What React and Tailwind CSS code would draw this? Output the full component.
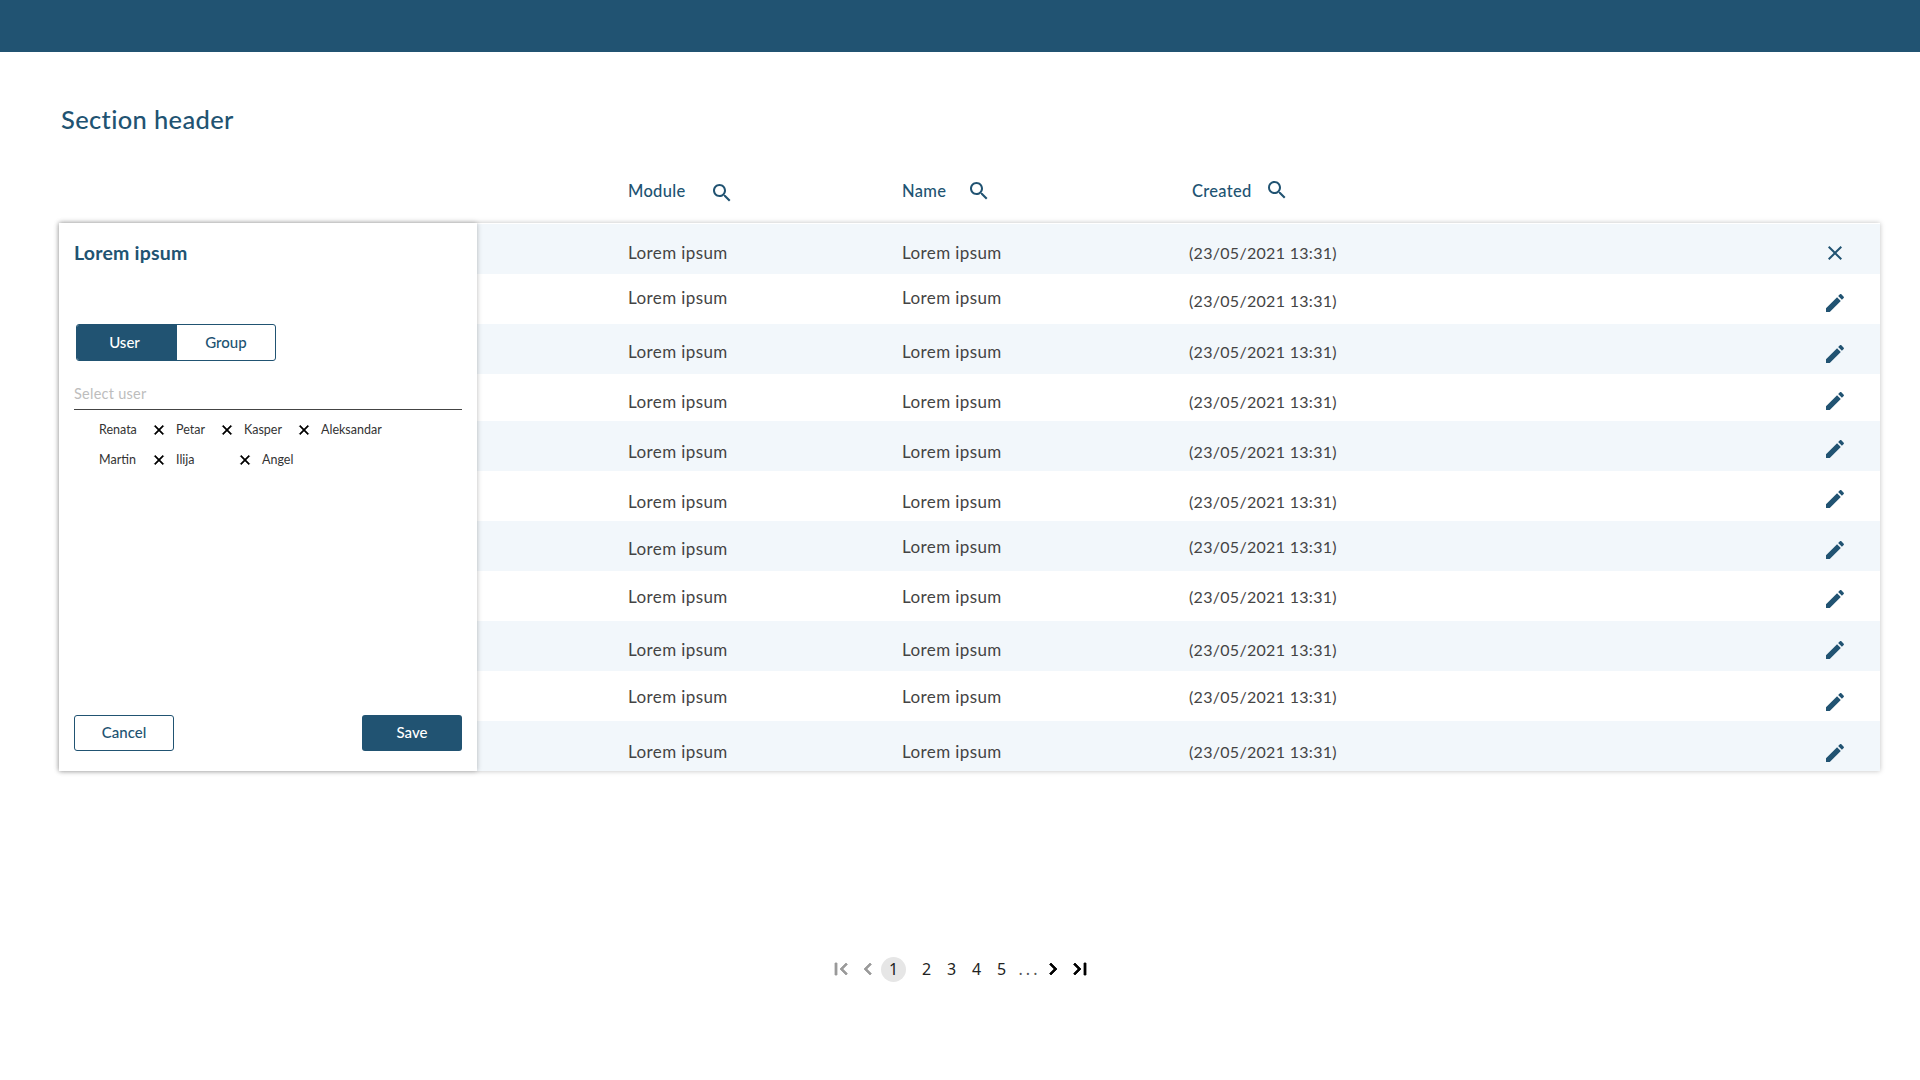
import { useState } from 'react';

const FONT = 'font-[Lato,"Open_Sans",sans-serif]';

const paths = {
  search: 'M15.5 14h-.79l-.28-.27C15.41 12.59 16 11.11 16 9.5 16 5.91 13.09 3 9.5 3S3 5.91 3 9.5 5.91 16 9.5 16c1.61 0 3.09-.59 4.23-1.57l.27.28v.79l5 4.99L20.49 19l-4.99-5zm-6 0C7.01 14 5 11.99 5 9.5S7.01 5 9.5 5 14 7.01 14 9.5 11.99 14 9.5 14z',
  edit: 'M3 17.25V21h3.75L17.81 9.94l-3.75-3.75L3 17.25zM20.71 7.04c.39-.39.39-1.02 0-1.41l-2.34-2.34c-.39-.39-1.02-.39-1.41 0l-1.83 1.83 3.75 3.75 1.83-1.83z',
  close: 'M19 6.41L17.59 5 12 10.59 6.41 5 5 6.41 10.59 12 5 17.59 6.41 19 12 13.41 17.59 19 19 17.59 13.41 12z',
  first: 'M18.41 16.59L13.82 12l4.59-4.59L17 6l-6 6 6 6zM6 6h2v12H6z',
  last: 'M5.59 7.41L10.18 12l-4.59 4.59L7 18l6-6-6-6zM16 6h2v12h-2z',
  prev: 'M15.41 7.41L14 6l-6 6 6 6 1.41-1.41L10.83 12z',
  next: 'M10 6L8.59 7.41 13.17 12l-4.58 4.59L10 18l6-6z',
};

function Icon({ name, className }) {
  return (
    <svg viewBox="0 0 24 24" fill="currentColor" className={className}>
      <path d={paths[name]} />
    </svg>
  );
}

// heights and cell offsets follow the picture, the rows are not perfectly regular
const rows = [
  { h: 50, a: 4, b: 4, c: 4, i: 4, tint: true, close: true },
  { h: 50, a: -1.5, b: -1, c: 2, i: 4 },
  { h: 50, a: 3, b: 3, c: 3, i: 5, tint: true },
  { h: 47, a: 4.5, b: 4.5, c: 4.5, i: 3.5 },
  { h: 50, a: 6, b: 6, c: 6, i: 3, tint: true },
  { h: 50, a: 6, b: 6, c: 6, i: 3 },
  { h: 50, a: 3, b: 1, c: 1, i: 4, tint: true },
  { h: 50, a: 1, b: 1, c: 1, i: 3 },
  { h: 50, a: 4, b: 4, c: 4, i: 3.5, tint: true },
  { h: 50, a: 1, b: 1, c: 1, i: 5.5 },
  { h: 50, a: 6, b: 6, c: 6, i: 6.5, tint: true },
];

const chips = [
  [
    { name: 'Renata', w: 51 },
    { name: 'Petar', w: 42 },
    { name: 'Kasper', w: 51 },
    { name: 'Aleksandar', w: 60, last: true },
  ],
  [
    { name: 'Martin', w: 51 },
    { name: 'Ilija', w: 60 },
    { name: 'Angel', w: 50, last: true },
  ],
];

function HeaderCell({ label, width, gap, iconShift }) {
  return (
    <div className={`flex items-center ${width}`}>
      <span className="text-[16.5px] font-medium text-[#215372] tracking-[0.3px]">{label}</span>
      <Icon name="search" className={`size-[24px] text-[#215372] ${gap} ${iconShift}`} />
    </div>
  );
}

function UserPanel() {
  const [tab] = useState('User');
  return (
    <div className="w-[418px] shrink-0 h-[548px] bg-white flex flex-col px-[15px] pb-[20px] pt-[18px] shadow-[0_0_5px_rgba(0,0,0,0.28)] z-10">
      <h2 className="text-[19.5px] font-bold leading-[24px] text-[#215372] tracking-[0.2px]">Lorem ipsum</h2>
      <div className="flex w-[200px] h-[37px] ml-[2px] mt-[59px] border border-[#215372] rounded-[3px] overflow-hidden text-[15px] font-medium">
        <div className={`w-[100px] pr-[5px] flex items-center justify-center ${tab === 'User' ? 'bg-[#215372] text-white' : ''}`}>User</div>
        <div className="flex-1 flex items-center justify-center text-[#215372]">Group</div>
      </div>
      <div className="mt-[21px] h-[28px] pt-[2px] border-b border-[#444] text-[14.5px] leading-[20px] text-[#bdbdbd] tracking-[0.25px]">Select user</div>
      <div className="flex flex-col mt-[11px] pl-[25px] gap-[12px]">
        {chips.map((line, n) => (
          <div key={n} className="flex h-[18px] items-center text-[12.5px] text-[#333]">
            {line.map((c) => (
              <div key={c.name} className="flex items-center">
                <span style={{ width: c.w }}>{c.name}</span>
                {!c.last && <Icon name="close" className="size-[16px] text-black stroke-current stroke-[0.8px] ml-[1px] mr-[9px]" />}
              </div>
            ))}
          </div>
        ))}
      </div>
      <div className="mt-auto flex justify-between">
        <button className="w-[100px] h-[36px] pb-[1px] rounded-[3px] border border-[#215372] text-[15px] font-medium text-[#215372]">Cancel</button>
        <button className="w-[100px] h-[36px] pb-[1px] rounded-[3px] bg-[#215372] text-[15px] font-medium text-white">Save</button>
      </div>
    </div>
  );
}

export default function App() {
  const pageBtn = 'w-[25px] text-center';
  return (
    <div className={`${FONT} min-h-[1080px] bg-white`}>
      <div className="h-[52px] bg-[#215372]" />
      <h1 className="ml-[61px] mt-[51px] mb-[1px] text-[25.5px] leading-[32px] font-medium text-[#215372] tracking-[0.35px]">Section header</h1>

      <div className="flex items-center h-[87px] pt-[23px] pl-[628px]">
        <HeaderCell label="Module" width="w-[274px]" gap="ml-[24px]" iconShift="mt-[3px]" />
        <HeaderCell label="Name" width="w-[290px]" gap="ml-[21px]" iconShift="" />
        <HeaderCell label="Created" width="" gap="ml-[13px]" iconShift="mt-[-2px]" />
      </div>

      <div className="flex ml-[59px] mr-[40px] h-[548px] shadow-[0_0_5px_rgba(0,0,0,0.25)] bg-white">
        <UserPanel />
        <div className="flex-1 flex flex-col pt-px">
          {rows.map((r, idx) => (
            <div
              key={idx}
              style={{ height: r.h }}
              className={`flex items-center pl-[151px] text-[#444] tracking-[0.3px] ${r.tint ? 'bg-[#f2f7fb]' : 'bg-white'}`}
            >
              <span className="w-[274px] text-[17px] tracking-[0.4px]" style={{ marginTop: r.a * 2 }}>Lorem ipsum</span>
              <span className="w-[287px] text-[17px] tracking-[0.4px]" style={{ marginTop: r.b * 2 }}>Lorem ipsum</span>
              <span className="w-[634px] text-[16px]" style={{ marginTop: r.c * 2 }}>(23/05/2021 13:31)</span>
              <span style={{ marginTop: r.i * 2 }}>
                <Icon name={r.close ? 'close' : 'edit'} className="size-[24px] text-[#215372]" />
              </span>
            </div>
          ))}
        </div>
      </div>

      <div className="flex items-center justify-center h-[30px] mt-[183px] pl-[1px] text-[16px] font-['Noto_Sans',sans-serif] text-[#222]">
        <Icon name="first" className="size-[24px] text-[#9a9a9a] stroke-current stroke-[0.8px]" />
        <Icon name="prev" className="size-[24px] text-[#9a9a9a] stroke-current stroke-[0.8px] ml-[3px]" />
        <span className="size-[25px] rounded-full bg-[#e6e6e6] flex items-center justify-center ml-[1px]">1</span>
        <span className={`${pageBtn} ml-[8px]`}>2</span>
        <span className={pageBtn}>3</span>
        <span className={pageBtn}>4</span>
        <span className={pageBtn}>5</span>
        <span className="w-[27px] pl-[4px] text-center tracking-[3px] text-[#555]">...</span>
        <Icon name="next" className="size-[24px] text-black stroke-current stroke-[0.8px]" />
        <Icon name="last" className="size-[24px] text-black stroke-current stroke-[0.8px] ml-[3px]" />
      </div>
    </div>
  );
}
